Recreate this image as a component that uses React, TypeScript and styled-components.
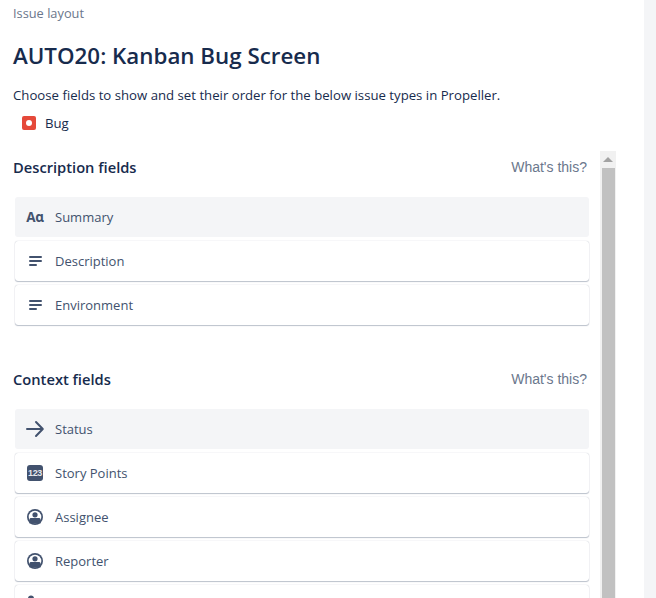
import React from "react";
import styled, { createGlobalStyle } from "styled-components";

const Global = createGlobalStyle`
  html, body { margin: 0; height: 100%; background: #fff; overflow: hidden; }
  body { font-family: "Open Sans", "Noto Sans", "Liberation Sans", sans-serif; }
  #root { height: 100%; }
`;

const Page = styled.div`
  display: flex;
  height: 598px;
  width: 656px;
`;
const Main = styled.main`
  flex: 1;
  min-width: 0;
  display: flex;
  flex-direction: column;
  padding: 5px 28px 0 13px;
  box-sizing: border-box;
`;
const Strip = styled.aside`
  width: 12px;
  background: #f4f5f7;
`;
const Crumb = styled.div`
  font-size: 12.8px;
  line-height: 17px;
  color: #6b778c;
`;
const Title = styled.h1`
  margin: 18px 0 0;
  font-size: 22.35px;
  line-height: 32px;
  font-weight: 600;
  color: #172b4d;
`;
const Intro = styled.p`
  margin: 13px 0 0;
  font-size: 13.2px;
  line-height: 20px;
  color: #172b4d;
`;
const IssueType = styled.div`
  display: flex;
  align-items: center;
  gap: 9px;
  margin: 8px 0 0 9px;
  height: 20px;
  font-size: 13.2px;
  color: #172b4d;
`;
const BugIcon = styled.span`
  width: 14px;
  height: 14px;
  border-radius: 2px;
  background: #e5493a;
  display: flex;
  align-items: center;
  justify-content: center;
  &::after {
    content: "";
    width: 6px;
    height: 6px;
    border-radius: 50%;
    background: #fff;
  }
`;
const ScrollArea = styled.div`
  flex: 1;
  min-height: 0;
  margin-top: 18px;
  display: flex;
`;
const Scroller = styled.div`
  flex: 1;
  min-width: 0;
  overflow: hidden;
`;
const ScrollBar = styled.div`
  width: 16px;
  flex: none;
  display: flex;
  flex-direction: column;
  background: #f1f1f1;
`;
const ScrollUp = styled.div`
  height: 17px;
  flex: none;
  display: flex;
  align-items: center;
  justify-content: center;
  &::after {
    content: "";
    border-left: 5px solid transparent;
    border-right: 5px solid transparent;
    border-bottom: 5px solid #a3a3a3;
  }
`;
const ScrollThumb = styled.div`
  flex: 1;
  margin: 0 1px 0 2px;
  background: #c1c1c1;
`;
const Section = styled.section`
  padding-right: 11px;
  margin-bottom: 38px;
`;
const SectionHead = styled.div`
  display: flex;
  align-items: center;
  justify-content: space-between;
  height: 32px;
  margin-bottom: 14px;
`;
const SectionTitle = styled.h2`
  margin: 0;
  font-size: 14.7px;
  font-weight: 600;
  color: #172b4d;
`;
const Help = styled.a`
  font-family: "Liberation Sans", Arial, sans-serif;
  font-size: 14px;
  color: #6b778c;
  margin-right: 2px;
`;
const List = styled.div`
  display: flex;
  flex-direction: column;
  gap: 4px;
  margin-left: 2px;
`;
const Row = styled.div<{ $locked?: boolean }>`
  height: 40px;
  box-sizing: border-box;
  display: flex;
  align-items: center;
  gap: 12px;
  padding-left: 12px;
  border-radius: 3px;
  font-size: 13px;
  color: #42526e;
  background: ${(p) => (p.$locked ? "#f4f5f7" : "#fff")};
  box-shadow: ${(p) =>
    p.$locked ? "none" : "0 1px 1px rgba(9,30,66,.25), 0 0 1px rgba(9,30,66,.31)"};
`;
const IconBox = styled.span`
  width: 16px;
  height: 16px;
  flex: none;
  display: flex;
  align-items: center;
  justify-content: center;
  color: #42526e;
  svg { display: block; flex: none; overflow: visible; }
`;
const AaGlyph = styled.span`
  font-size: 13.5px;
  font-weight: 700;
  letter-spacing: -0.2px;
  white-space: nowrap;
`;
const NumBadge = styled.span`
  width: 16px;
  height: 16px;
  flex: none;
  border-radius: 3px;
  background: #42526e;
  color: #e6e8ed;
  font-family: "Liberation Sans", sans-serif;
  font-size: 9px;
  font-weight: 700;
  letter-spacing: -0.3px;
  display: flex;
  align-items: center;
  justify-content: center;
`;

const Lines = () => (
  <svg width="16" height="16" viewBox="0 0 16 16" fill="currentColor">
    <rect x="2" y="3" width="13" height="2" rx="1" />
    <rect x="2" y="7" width="13" height="2" rx="1" />
    <rect x="2" y="11" width="8" height="2" rx="1" />
  </svg>
);
const Arrow = () => (
  <svg width="18" height="16" viewBox="0 0 18 16" fill="none" stroke="currentColor" strokeWidth="2" strokeLinecap="round" strokeLinejoin="round">
    <path d="M1 8h15.5M10 1 16.8 8 10 15" />
  </svg>
);
const Person = () => (
  <svg width="16" height="16" viewBox="0 0 16 16">
    <circle cx="8" cy="8" r="8" fill="currentColor" />
    <circle cx="8" cy="8" r="6.3" fill="#fff" />
    <circle cx="8" cy="5.8" r="2.6" fill="currentColor" />
    <path d="M2.5 10.4c0-.8.7-1.4 1.5-1.4h8c.8 0 1.5.6 1.5 1.4V14.5h-11z" fill="currentColor" />
  </svg>
);
const Silhouette = () => (
  <svg width="16" height="16" viewBox="0 0 16 16" fill="currentColor">
    <circle cx="4" cy="1.5" r="3" />
    <path d="M-2 12c0-3.2 2.7-5 6-5s6 1.8 6 5z" />
  </svg>
);

const type = {
  text: <AaGlyph>Aɑ</AaGlyph>,
  lines: <Lines />,
  arrow: <Arrow />,
  num: <NumBadge>123</NumBadge>,
  person: <Person />,
  silhouette: <Silhouette />,
};

type Field = { name: string; icon: keyof typeof type; locked?: boolean };

const description: Field[] = [
  { name: "Summary", icon: "text", locked: true },
  { name: "Description", icon: "lines" },
  { name: "Environment", icon: "lines" },
];
const context: Field[] = [
  { name: "Status", icon: "arrow", locked: true },
  { name: "Story Points", icon: "num" },
  { name: "Assignee", icon: "person" },
  { name: "Reporter", icon: "person" },
  { name: "", icon: "silhouette" },
];

const FieldSection = ({ title, fields }: { title: string; fields: Field[] }) => (
  <Section>
    <SectionHead>
      <SectionTitle>{title}</SectionTitle>
      <Help>What's this?</Help>
    </SectionHead>
    <List>
      {fields.map((f) => (
        <Row key={f.name || f.icon} $locked={f.locked}>
          <IconBox>{type[f.icon]}</IconBox>
          {f.name}
        </Row>
      ))}
    </List>
  </Section>
);

export default function App() {
  return (
    <Page>
      <Global />
      <Main>
        <Crumb>Issue layout</Crumb>
        <Title>AUTO20: Kanban Bug Screen</Title>
        <Intro>Choose fields to show and set their order for the below issue types in Propeller.</Intro>
        <IssueType>
          <BugIcon />
          Bug
        </IssueType>
        <ScrollArea>
          <Scroller>
            <FieldSection title="Description fields" fields={description} />
            <FieldSection title="Context fields" fields={context} />
          </Scroller>
          <ScrollBar>
            <ScrollUp />
            <ScrollThumb />
          </ScrollBar>
        </ScrollArea>
      </Main>
      <Strip />
    </Page>
  );
}
